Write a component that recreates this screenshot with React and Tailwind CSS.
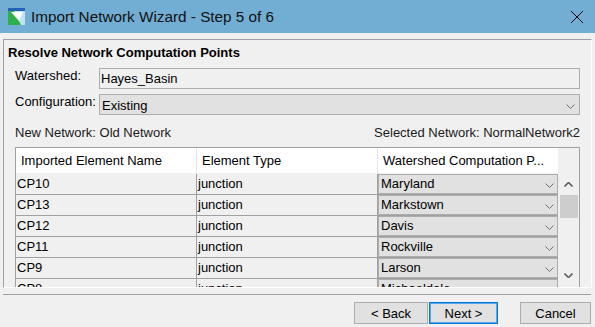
import React from "react";

const rows = [
  { name: "CP10", type: "junction", point: "Maryland" },
  { name: "CP13", type: "junction", point: "Markstown" },
  { name: "CP12", type: "junction", point: "Davis" },
  { name: "CP11", type: "junction", point: "Rockville" },
  { name: "CP9", type: "junction", point: "Larson" },
  { name: "CP8", type: "junction", point: "Michaeldale" },
];

const Chevron = ({ className = "", stroke = "#606060", width = 1 }) => (
  <svg viewBox="0 0 9 5" className={className} fill="none">
    <path d="M0.5 0.5 L4.5 4.5 L8.5 0.5" stroke={stroke} strokeWidth={width} />
  </svg>
);

const WizardIcon = () => (
  <svg viewBox="0 0 17 17" className="ml-[8px] w-[17px] h-[17px]">
    <rect width="17" height="17" fill="#2eb04a" />
    <polygon points="6,3 17,3 17,17 13,17" fill="#bfe3f5" />
    <rect width="17" height="3" fill="#2563b4" />
    <polygon points="3,4 15,4 11,13" fill="#ffffff" />
  </svg>
);

export default function App() {
  return (
    <div className="w-[595px] h-[327px] overflow-hidden bg-[#f0f0f0] font-['Liberation_Sans',Arial,sans-serif] text-[13px] leading-[15px] text-black">
      {/* Title bar */}
      <div className="h-[33px] bg-[#72aed3] flex items-center">
        <WizardIcon />
        <span className="ml-[6px] text-[15.3px] leading-[18px] text-[#111]">
          Import Network Wizard - Step 5 of 6
        </span>
        <svg viewBox="0 0 12 12" className="ml-auto mr-[12px] w-[12px] h-[12px]">
          <path d="M0 0 L12 12 M12 0 L0 12" stroke="#000" strokeWidth="1" />
        </svg>
      </div>

      {/* Main panel */}
      <div className="mt-[6px] ml-[3px] w-[589px] h-[249px] overflow-hidden border border-[#a0a0a0] border-r-white border-b-white">
        <div className="pl-[4px] pt-[5px] font-bold">Resolve Network Computation Points</div>

        <div className="px-[11px]">
          <div className="mt-[8px] flex items-start">
            <div className="w-[84px]">Watershed:</div>
            <div className="flex-1 h-[21px] border border-[#adadad] bg-[#f0f0f0] pl-[1px] pt-[2px]">
              Hayes_Basin
            </div>
          </div>

          <div className="mt-[5px] flex items-start">
            <div className="w-[84px]">Configuration:</div>
            <div className="flex-1 h-[21px] border border-[#adadad] bg-[#e1e1e1] pl-[2px] pt-[3px] flex items-start">
              <span className="flex-1">Existing</span>
              <Chevron className="w-[9px] h-[5px] mt-[6px] mr-[4px]" stroke="#707070" />
            </div>
          </div>

          <div className="mt-[10px] flex justify-between text-[#1b1b1b]">
            <span>New Network: Old Network</span>
            <span>Selected Network: NormalNetwork2</span>
          </div>

          {/* Table */}
          <div className="mt-[7px] h-[141px] border border-[#a0a0a0] flex">
            <div className="w-[542px] flex flex-col overflow-hidden">
              <div className="h-[26px] shrink-0 bg-white flex border-b border-[#f0f0f0]">
                <div className="w-[180px] pl-[5px] pt-[5px]">Imported Element Name</div>
                <div className="w-px bg-[#e5e5e5]" />
                <div className="w-[180px] pl-[5px] pt-[5px]">Element Type</div>
                <div className="w-px bg-[#e5e5e5]" />
                <div className="w-[180px] pl-[5px] pt-[5px]">Watershed Computation P...</div>
              </div>
              {rows.map((r) => (
                <div key={r.name} className="h-[21px] shrink-0 flex border-b border-[#a0a0a0]">
                  <div className="w-[180px] pl-[1px] pt-[2px]">{r.name}</div>
                  <div className="w-px bg-[#a0a0a0]" />
                  <div className="w-[180px] pl-[1px] pt-[2px]">{r.type}</div>
                  <div className="w-px bg-[#a0a0a0]" />
                  <div className="w-[180px] h-[20px] border border-[#adadad] bg-[#e1e1e1] pl-[2px] pt-[1px] flex items-start">
                    <span className="flex-1">{r.point}</span>
                    <Chevron className="w-[9px] h-[5px] mt-[7px] mr-[3px]" stroke="#707070" />
                  </div>
                </div>
              ))}
            </div>

            {/* Scrollbar */}
            <div className="w-[21px] flex flex-col bg-[#f0f0f0]">
              <div className="h-[26px] shrink-0" />
              <div className="h-[21px] shrink-0 flex items-center justify-center">
                <Chevron className="w-[9px] h-[5px] rotate-180" stroke="#606060" width={1.6} />
              </div>
              <div className="flex-1">
                <div className="ml-[2px] w-[18px] h-[23px] bg-[#cdcdcd]" />
              </div>
              <div className="h-[21px] shrink-0 mb-[1px] flex items-center justify-center">
                <Chevron className="w-[9px] h-[5px]" stroke="#606060" width={1.6} />
              </div>
            </div>
          </div>
        </div>
      </div>

      {/* Separator */}
      <div className="mt-[6px] ml-[3px] w-[588px] h-px bg-[#a0a0a0]" />

      {/* Buttons */}
      <div className="mt-[7px] flex">
        <button className="ml-[354px] w-[74px] h-[22px] border border-[#adadad] bg-[#e1e1e1] flex items-center justify-center">
          &lt; Back
        </button>
        <button className="ml-[1px] w-[69px] h-[22px] border border-[#0078d7] bg-[#e1e1e1] shadow-[inset_0_0_0_1px_#5aa6e6] flex items-center justify-center">
          Next &gt;
        </button>
        <button className="ml-[22px] w-[71px] h-[22px] border border-[#adadad] bg-[#e1e1e1] flex items-center justify-center">
          Cancel
        </button>
      </div>
    </div>
  );
}
